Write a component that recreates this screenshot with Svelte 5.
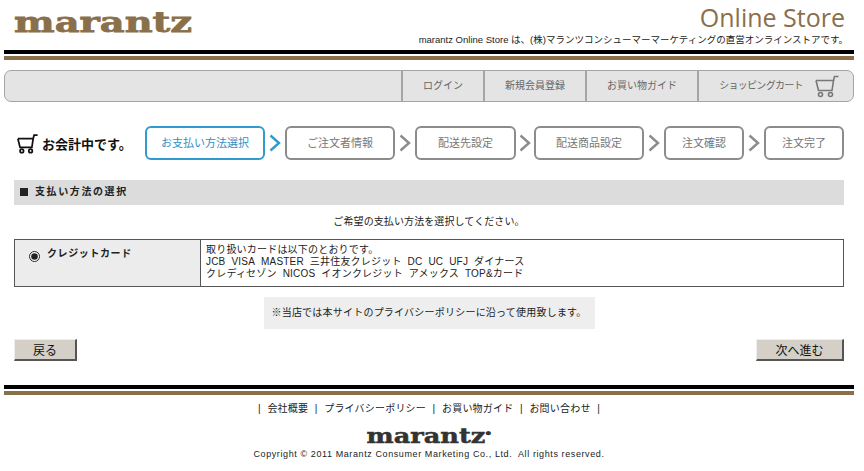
<script>
  // 購入フロー: お支払い方法の選択
  const menu = [
    { label: "ログイン", w: 82 },
    { label: "新規会員登録", w: 102 },
    { label: "お買い物ガイド", w: 112 }
  ];
  const steps = [
    { label: "お支払い方法選択", w: 120, on: true, gap: 4 },
    { label: "ご注文者情報", w: 110, gap: 4 },
    { label: "配送先設定", w: 101, gap: 3 },
    { label: "配送商品設定", w: 110, gap: 4 },
    { label: "注文確認", w: 80, gap: 4 },
    { label: "注文完了", w: 80 }
  ];
  const footer = ["会社概要", "プライバシーポリシー", "お買い物ガイド", "お問い合わせ"];
</script>

{#snippet cart(size, color, sw)}
  <svg class="cart" width={size} height={size} viewBox="0 0 24 24" fill="none" stroke={color} stroke-width={sw}>
    <path d="M1 6.5H18.5L19.5 2.5H23.5" />
    <path d="M1 6.5L3.5 16.5H17L18.5 6.5" />
    <circle cx="5.5" cy="20.5" r="2" />
    <circle cx="15.5" cy="20.5" r="2" />
  </svg>
{/snippet}

<div class="page">
  <header class="top">
    <div class="logo">marantz</div>
    <div class="top-right">
      <div class="store">Online Store</div>
      <div class="lead">marantz Online Store は、(株)マランツコンシューマーマーケティングの直営オンラインストアです。</div>
    </div>
  </header>
  <div class="rule"></div>

  <nav class="nav">
    {#each menu as m}
      <a class="nav-item" style="width: {m.w}px"><span class="nav-label">{m.label}</span></a>
    {/each}
    <a class="nav-item nav-cart"><span class="nav-label cart-label">ショッピングカート</span> {@render cart(24, "#777", 1.6)}</a>
  </nav>

  <div class="main">
    <div class="steps">
      <div class="checkout">{@render cart(21, "#111", 2)}<span>お会計中です。</span></div>
      {#each steps as s, i}
        <div class="step" class:on={s.on} style="width: {s.w}px">{s.label}</div>
        {#if i < steps.length - 1}
          <svg class="chev" style="margin: 0 {s.gap}px" width="12" height="18" viewBox="0 0 12 18" fill="none" stroke={s.on ? "#2f9bd0" : "#8c8c8c"} stroke-width="2.4">
            <path d="M1.5 1.5L10 9L1.5 16.5" />
          </svg>
        {/if}
      {/each}
    </div>

    <h2 class="sec"><i class="sq"></i>支払い方法の選択</h2>
    <p class="ask">ご希望の支払い方法を選択してください。</p>

    <div class="pay">
      <label class="pay-name"><input type="radio" checked /> クレジットカード</label>
      <div class="pay-desc">
        取り扱いカードは以下のとおりです。<br />
        JCB&nbsp; VISA&nbsp; MASTER&nbsp; 三井住友クレジット&nbsp; DC&nbsp; UC&nbsp; UFJ&nbsp; ダイナース<br />
        クレディセゾン&nbsp; NICOS&nbsp; イオンクレジット&nbsp; アメックス&nbsp; TOP&amp;カード
      </div>
    </div>

    <div class="note">※当店では本サイトのプライバシーポリシーに沿って使用致します。</div>

    <div class="btns">
      <button class="back">戻る</button>
      <button class="next">次へ進む</button>
    </div>
  </div>

  <div class="rule foot-rule"></div>

  <footer class="foot">
    <div class="foot-links">
      <span class="bar">|</span>
      {#each footer as f}
        <a>{f}</a><span class="bar">|</span>
      {/each}
    </div>
    <div class="foot-logo">marantz<sup>®</sup></div>
    <div class="copy">Copyright © 2011 Marantz Consumer Marketing Co., Ltd.&nbsp; All rights reserved.</div>
  </footer>
</div>

<style>
  :global(body) { margin: 0; background: #fff; }
  .page { width: 864px; height: 471px; overflow: hidden; padding: 0 10px 0 4px; box-sizing: border-box; font-family: "Liberation Sans", "Noto Sans CJK JP", sans-serif; font-size: 10px; color: #222; }

  .top { height: 50px; display: flex; justify-content: space-between; }
  .logo { margin: 6px 0 0 10px; height: 32px; line-height: 32px; font-family: "DejaVu Serif", serif; font-weight: 900; font-size: 30px; color: #8a6f4b; transform: scale(1.28, .96); transform-origin: left center; -webkit-text-stroke: .8px #8a6f4b; }
  .top-right { text-align: right; padding-right: 6px; }
  .store { margin-top: 2px; padding-right: 3px; font-family: "Open Sans", sans-serif; font-size: 25px; line-height: 30px; color: #8a6f4b; }
  .lead { margin-top: 1px; font-size: 9.5px; line-height: 14px; color: #222; white-space: nowrap; }

  .rule { height: 10px; box-sizing: border-box; border-top: 4px solid #000; background: linear-gradient(#fff 0 2px, #8a6f4b 2px); }

  .nav { height: 32px; margin-top: 10px; display: flex; justify-content: flex-end; box-sizing: border-box; background: #e4e4e4; border: 1px solid #a5a5a5; border-radius: 7px; }
  .nav-item { display: flex; align-items: center; justify-content: center; border-left: 2px solid #a5a5a5; box-sizing: border-box; color: #666; font-size: 10px; }
  .nav-label { margin-bottom: 3px; }
  .nav-cart { width: 156px; gap: 12px; padding-left: 6px; }
  .cart-label { letter-spacing: -.7px; }
  .cart { flex: none; }

  .main { padding: 0 0 0 10px; width: 830px; }
  .steps { display: flex; align-items: center; height: 34px; margin-top: 24px; }
  .checkout { width: 132px; display: flex; align-items: center; gap: 4px; margin-left: 3px; margin-right: -4px; font-size: 13px; font-weight: 700; color: #111; }
  .step { height: 34px; line-height: 30px; box-sizing: border-box; flex: none; text-align: center; border: 2px solid #8c8c8c; border-radius: 6px; color: #777; font-size: 11px; }
  .step.on { border-color: #2f9bd0; color: #2f8fc4; }
  .chev { flex: none; }

  .sec { margin: 20px 0 0; height: 25px; line-height: 24px; padding-left: 6px; background: #dcdcdc; font-size: 10px; letter-spacing: 1.6px; font-weight: 700; color: #222; }
  .sq { display: inline-block; width: 8px; height: 8px; margin-right: 7px; background: #222; vertical-align: -1px; }
  .ask { margin: 10px 0 0; height: 13px; line-height: 13px; text-align: center; font-size: 10px; letter-spacing: .1px; }

  .pay { margin-top: 11px; height: 48px; display: flex; box-sizing: border-box; border: 1px solid #555; }
  .pay-name { width: 171px; flex: none; background: #ececec; border-right: 1px solid #555; display: flex; align-items: flex-start; gap: 7px; padding: 6px 0 0 14px; font-weight: 700; font-size: 10px; line-height: 16px; letter-spacing: .6px; }
  .pay-name input { margin: 5px 0 0; width: 11px; height: 11px; accent-color: #222; }
  .pay-desc { padding: 4px 0 0 5px; line-height: 12px; letter-spacing: .2px; white-space: nowrap; }

  .note { width: 331px; height: 32px; line-height: 32px; margin: 10px auto 0; text-align: center; background: #eee; font-size: 10px; letter-spacing: .22px; }

  .btns { display: flex; justify-content: space-between; margin-top: 10px; }
  .btns button { height: 22px; padding: 0; font-family: inherit; font-size: 12px; color: #111; background: #d4d0c8; border: none; border-right: 2px solid #555; border-bottom: 2px solid #555; border-top: 1px solid #eee; border-left: 1px solid #eee; }
  .back { width: 63px; }
  .next { width: 88px; }

  .foot-rule { margin-top: 24px; }
  .foot { text-align: center; }
  .foot-links { margin-top: 7px; height: 14px; line-height: 14px; display: flex; justify-content: center; gap: 6.6px; font-size: 10px; letter-spacing: .2px; }
  .foot-logo { margin-top: 8px; height: 19px; line-height: 19px; font-family: "DejaVu Serif", serif; font-weight: 900; font-size: 21px; color: #333; transform: scale(1.22, 1); -webkit-text-stroke: .5px #333; }
  .foot-logo sup { font-size: 5px; }
  .copy { margin-top: 4px; font-size: 9px; letter-spacing: .6px; line-height: 14px; }
</style>
